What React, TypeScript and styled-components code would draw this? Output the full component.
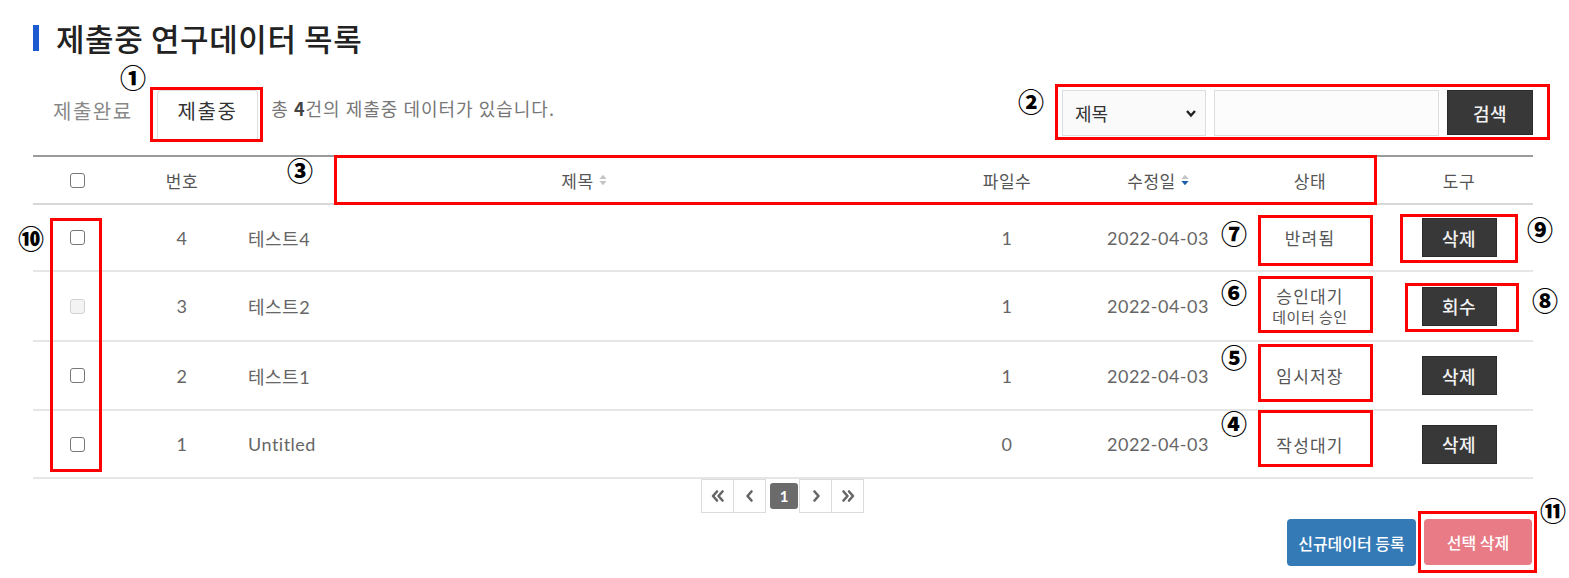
import React from "react";
import styled, { createGlobalStyle } from "styled-components";

const GlobalStyle = createGlobalStyle`
  html, body { margin: 0; padding: 0; background: #fff; }
  body { font-family: "Noto Sans CJK KR", "Noto Sans", sans-serif; color: #555; }
  * { box-sizing: border-box; }
`;

const Page = styled.div`
  position: relative;
  width: 1569px;
  height: 578px;
  padding: 23px 36px 0 33px;
  overflow: hidden;
`;

const Title = styled.h2`
  margin: 0;
  display: flex;
  align-items: center;
  gap: 17px;
  height: 30px;
  font-size: 31px;
  font-weight: 500;
  letter-spacing: 0.6px;
  line-height: 30px;
  color: #222;
  &::before {
    content: "";
    width: 6px;
    height: 26px;
    background: #1f5bd0;
  }
`;

const Toolbar = styled.div`
  display: flex;
  align-items: flex-start;
  height: 56px;
  margin-top: 33px;
`;

const Tabs = styled.div`
  display: flex;
  gap: 4px;
  margin-top: 4px;
`;

const Tab = styled.div<{ $active?: boolean }>`
  height: 52px;
  padding: 8px ${(p) => (p.$active ? "20px" : "19px")} 0;
  font-size: 20px;
  letter-spacing: 1.5px;
  line-height: 24px;
  color: ${(p) => (p.$active ? "#333" : "#888")};
  border: 1px solid ${(p) => (p.$active ? "#ddd" : "transparent")};
  border-bottom: none;
  border-radius: 4px 4px 0 0;
`;

const Info = styled.div`
  margin: 10px 0 0 13px;
  font-size: 18px;
  letter-spacing: 1px;
  line-height: 24px;
  color: #777;
  b {
    color: #444;
    font-weight: 700;
  }
`;

const Search = styled.div`
  margin-left: auto;
  margin-top: 4px;
  display: flex;
  gap: 8px;
`;

const SelectWrap = styled.div`
  position: relative;
  width: 144px;
  height: 46px;
  svg {
    position: absolute;
    right: 9px;
    top: 19px;
    pointer-events: none;
  }
`;

const Select = styled.select`
  appearance: none;
  width: 100%;
  height: 100%;
  padding: 0 12px;
  border: 1px solid #ddd;
  background: #fafafa;
  font-family: inherit;
  font-size: 18px;
  color: #333;
  outline: none;
`;

const Input = styled.input`
  width: 225px;
  height: 46px;
  border: 1px solid #ddd;
  background: #fcfcfc;
  outline: none;
`;

const DarkButton = styled.button<{ $w: number; $h: number }>`
  width: ${(p) => p.$w}px;
  height: ${(p) => p.$h}px;
  background: #383838;
  border: 1px solid #2b2b2b;
  color: #f2f2f2;
  font-family: inherit;
  font-size: 18px;
  font-weight: 500;
  letter-spacing: 0.5px;
  padding: 0;
  cursor: pointer;
`;

const Table = styled.div`
  margin-top: 13px;
  border-top: 2px solid #9a9a9a;
`;

const COLS = "88px 122px 682px 164px 138px 166px 140px";

const HeadRow = styled.div`
  display: grid;
  grid-template-columns: ${COLS};
  height: 48px;
  border-bottom: 2px solid #d8d8d8;
`;

const Row = styled.div<{ $h: number }>`
  display: grid;
  grid-template-columns: ${COLS};
  height: ${(p) => p.$h}px;
  border-bottom: 2px solid #e6e6e6;
`;

const Cell = styled.div<{ $align?: "left" | "center"; $last?: boolean }>`
  display: flex;
  align-items: center;
  justify-content: ${(p) => (p.$align === "left" ? "flex-start" : "center")};
  padding-left: ${(p) => (p.$align === "left" ? "5px" : "0")};
  padding-right: ${(p) => (p.$last ? "8px" : "0")};
  gap: 5px;
`;

const HeadText = styled.span`
  font-size: 17px;
  letter-spacing: 0.5px;
  color: #555;
`;

const BodyText = styled.span`
  font-family: "Lato", "Noto Sans CJK KR", sans-serif;
  font-size: 18px;
  letter-spacing: 0.5px;
  color: #666;
`;

const Check = styled.input`
  appearance: none;
  margin: 0;
  width: 15px;
  height: 15px;
  border: 1.5px solid #777;
  border-radius: 3px;
  background: #fff;
  &:disabled {
    border-color: #d2d2d2;
    background: #f3f3f3;
  }
`;

const Status = styled.div`
  display: flex;
  flex-direction: column;
  align-items: center;
  line-height: 21px;
`;

const StatusMain = styled.span`
  font-size: 17px;
  letter-spacing: 1.2px;
  color: #555;
`;

const StatusSub = styled.span`
  font-size: 15px;
  letter-spacing: 0.5px;
  color: #555;
`;

const Pager = styled.div`
  display: flex;
  justify-content: center;
`;

const PageBtn = styled.div`
  width: 33px;
  height: 34px;
  border: 1px solid #dcdcdc;
  margin-left: -1px;
  display: flex;
  align-items: center;
  justify-content: center;
`;

const PageActive = styled.div`
  width: 28px;
  height: 26px;
  margin: 4px 2px 0 4px;
  background: #6b6b6b;
  border-radius: 3px;
  color: #fff;
  font-family: "Lato", sans-serif;
  font-weight: 700;
  font-size: 15px;
  display: flex;
  align-items: center;
  justify-content: center;
`;

const Footer = styled.div`
  display: flex;
  justify-content: flex-end;
  gap: 8px;
  margin-top: 6px;
  padding-right: 1px;
`;

const ColorButton = styled.button<{ $bg: string; $w: number; $h: number }>`
  width: ${(p) => p.$w}px;
  height: ${(p) => p.$h}px;
  background: ${(p) => p.$bg};
  border: none;
  border-radius: 4px;
  color: #fff;
  font-family: inherit;
  font-size: 16px;
  font-weight: 500;
  padding: 0;
`;

const RedBox = styled.div<{ $x: number; $y: number; $w: number; $h: number }>`
  position: absolute;
  left: ${(p) => p.$x}px;
  top: ${(p) => p.$y}px;
  width: ${(p) => p.$w}px;
  height: ${(p) => p.$h}px;
  border: 3px solid #f00;
  pointer-events: none;
`;

const Mark = styled.span<{ $x: number; $y: number }>`
  position: absolute;
  left: ${(p) => p.$x}px;
  top: ${(p) => p.$y}px;
  transform: translate(-50%, -50%);
  font-family: "Noto Sans CJK KR", sans-serif;
  font-weight: 900;
  font-size: 26px;
  line-height: 1;
  color: #000;
`;

const SortIcon = ({ active }: { active?: boolean }) => (
  <svg width="8" height="12" viewBox="0 0 8 12">
    <path d="M4 0.8 L7.6 5 L0.4 5 Z" fill="#c4c4c4" />
    <path d="M4 11.2 L7.6 7 L0.4 7 Z" fill={active ? "#1f5ea8" : "#c4c4c4"} />
  </svg>
);

const Chevron = ({ dir, double }: { dir: "l" | "r"; double?: boolean }) => {
  const one = dir === "l" ? "M9.5 3.5 L5.5 8 L9.5 12.5" : "M6.5 3.5 L10.5 8 L6.5 12.5";
  const two =
    dir === "l"
      ? "M7 3.5 L3 8 L7 12.5 M12.5 3.5 L8.5 8 L12.5 12.5"
      : "M3.5 3.5 L7.5 8 L3.5 12.5 M9 3.5 L13 8 L9 12.5";
  return (
    <svg width="16" height="16" viewBox="0 0 16 16">
      <path d={double ? two : one} fill="none" stroke="#666" strokeWidth="2.6" strokeLinecap="round" strokeLinejoin="round" />
    </svg>
  );
};

type RowData = {
  no: number;
  title: string;
  files: number;
  date: string;
  status: string;
  sub?: string;
  action: string;
  disabled?: boolean;
  h: number;
};

const rows: RowData[] = [
  { no: 4, title: "테스트4", files: 1, date: "2022-04-03", status: "반려됨", action: "삭제", h: 67 },
  { no: 3, title: "테스트2", files: 1, date: "2022-04-03", status: "승인대기", sub: "데이터 승인", action: "회수", disabled: true, h: 70 },
  { no: 2, title: "테스트1", files: 1, date: "2022-04-03", status: "임시저장", action: "삭제", h: 69 },
  { no: 1, title: "Untitled", files: 0, date: "2022-04-03", status: "작성대기", action: "삭제", h: 68 },
];

export default function App() {
  return (
    <Page>
      <GlobalStyle />
      <Title>제출중 연구데이터 목록</Title>

      <Toolbar>
        <Tabs>
          <Tab>제출완료</Tab>
          <Tab $active>제출중</Tab>
        </Tabs>
        <Info>
          총 <b>4</b>건의 제출중 데이터가 있습니다.
        </Info>
        <Search>
          <SelectWrap>
            <Select defaultValue="title">
              <option value="title">제목</option>
            </Select>
            <svg width="12" height="9" viewBox="0 0 12 9">
              <path d="M2 2 L6 6.5 L10 2" fill="none" stroke="#222" strokeWidth="2.4" />
            </svg>
          </SelectWrap>
          <Input />
          <DarkButton $w={86} $h={45}>검색</DarkButton>
        </Search>
      </Toolbar>

      <Table>
        <HeadRow>
          <Cell><Check type="checkbox" /></Cell>
          <Cell><HeadText>번호</HeadText></Cell>
          <Cell><HeadText>제목</HeadText><SortIcon /></Cell>
          <Cell><HeadText>파일수</HeadText></Cell>
          <Cell><HeadText>수정일</HeadText><SortIcon active /></Cell>
          <Cell><HeadText>상태</HeadText></Cell>
          <Cell $last><HeadText>도구</HeadText></Cell>
        </HeadRow>
        {rows.map((r) => (
          <Row key={r.no} $h={r.h}>
            <Cell><Check type="checkbox" disabled={r.disabled} /></Cell>
            <Cell><BodyText>{r.no}</BodyText></Cell>
            <Cell $align="left"><BodyText>{r.title}</BodyText></Cell>
            <Cell><BodyText>{r.files}</BodyText></Cell>
            <Cell><BodyText>{r.date}</BodyText></Cell>
            <Cell>
              <Status>
                <StatusMain>{r.status}</StatusMain>
                {r.sub && <StatusSub>{r.sub}</StatusSub>}
              </Status>
            </Cell>
            <Cell $last><DarkButton $w={75} $h={39}>{r.action}</DarkButton></Cell>
          </Row>
        ))}
      </Table>

      <Pager>
        <PageBtn><Chevron dir="l" double /></PageBtn>
        <PageBtn><Chevron dir="l" /></PageBtn>
        <PageActive>1</PageActive>
        <PageBtn><Chevron dir="r" /></PageBtn>
        <PageBtn><Chevron dir="r" double /></PageBtn>
      </Pager>

      <Footer>
        <ColorButton $bg="#337ab7" $w={129} $h={47}>신규데이터 등록</ColorButton>
        <ColorButton $bg="#e87b86" $w={108} $h={46}>선택 삭제</ColorButton>
      </Footer>

      <RedBox $x={150} $y={87} $w={113} $h={55} />
      <RedBox $x={1055} $y={84} $w={495} $h={56} />
      <RedBox $x={334} $y={155} $w={1043} $h={50} />
      <RedBox $x={50} $y={218} $w={52} $h={254} />
      <RedBox $x={1258} $y={215} $w={115} $h={51} />
      <RedBox $x={1258} $y={276} $w={115} $h={57} />
      <RedBox $x={1258} $y={344} $w={115} $h={58} />
      <RedBox $x={1258} $y={410} $w={115} $h={57} />
      <RedBox $x={1400} $y={214} $w={118} $h={49} />
      <RedBox $x={1405} $y={283} $w={114} $h={49} />
      <RedBox $x={1418} $y={511} $w={119} $h={62} />

      <Mark $x={133} $y={77}>①</Mark>
      <Mark $x={1031} $y={101}>②</Mark>
      <Mark $x={300} $y={170}>③</Mark>
      <Mark $x={1234} $y={423}>④</Mark>
      <Mark $x={1234} $y={357}>⑤</Mark>
      <Mark $x={1234} $y={292}>⑥</Mark>
      <Mark $x={1234} $y={233}>⑦</Mark>
      <Mark $x={1545} $y={300}>⑧</Mark>
      <Mark $x={1540} $y={229}>⑨</Mark>
      <Mark $x={31} $y={238}>⑩</Mark>
      <Mark $x={1553} $y={510}>⑪</Mark>
    </Page>
  );
}
